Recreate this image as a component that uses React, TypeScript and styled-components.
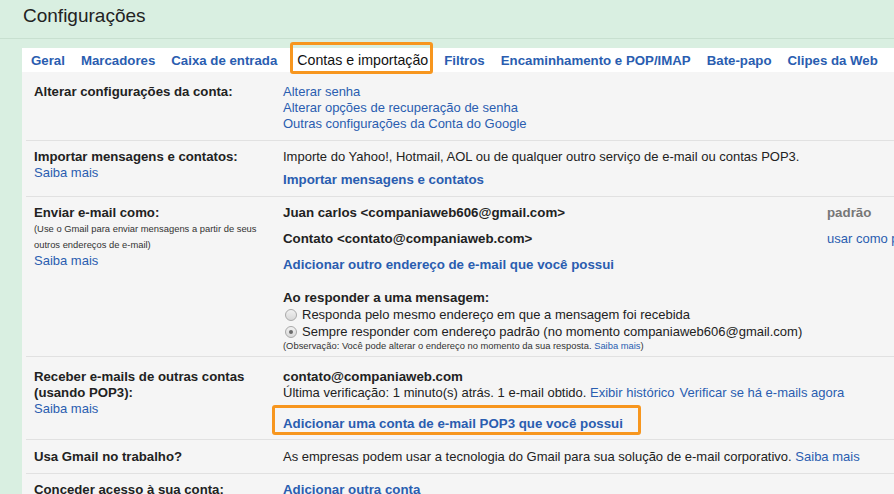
import React from 'react'
import styled, { createGlobalStyle } from 'styled-components'

const GlobalStyle = createGlobalStyle`
  html, body {
    margin: 0;
    padding: 0;
    overflow: hidden;
    background: #d9efe1;
  }
  body {
    font-family: "Liberation Sans", Arial, sans-serif;
    color: #222;
  }
`

const Page = styled.div`
  width: 894px;
  height: 494px;
  overflow: hidden;
`

const Header = styled.div`
  height: 33px;
  padding: 5px 0 0 23px;
  border-bottom: 1px solid #c8e0d0;
  font-size: 19px;
  line-height: 22px;
  color: #222;
`

const Panel = styled.div`
  margin: 9px 0 0 22px;
  background: #f5f5f5;
  padding-bottom: 40px;
`

const TabBar = styled.div`
  display: flex;
  height: 24px;
  padding-left: 1px;
  background: #fff;
`

const Tab = styled.div<{ $active?: boolean }>`
  position: relative;
  height: 24px;
  padding: 0 8px;
  font-size: ${(p) => (p.$active ? '14.2px' : '13.25px')};
  font-weight: ${(p) => (p.$active ? 'normal' : 'bold')};
  line-height: 25px;
  color: ${(p) => (p.$active ? '#111' : '#2a5db0')};
  white-space: nowrap;

  ${(p) =>
    p.$active &&
    `
    margin: 0 0 0 4px;
    &::after {
      content: '';
      position: absolute;
      left: 1px;
      right: 3px;
      top: -6px;
      bottom: -2px;
      border: 3px solid #f7961e;
      border-radius: 3px;
    }
  `}
`

const Body = styled.div`
  padding-top: 4px;
`

const Row = styled.div<{ $top?: number; $bottom?: number }>`
  display: grid;
  grid-template-columns: 249px 544px 140px;
  margin-left: 4px;
  padding: ${(p) => p.$top ?? 8}px 0 ${(p) => p.$bottom ?? 8}px 8px;
  border-bottom: 1px solid #e1e1e1;
  font-size: 13px;
  line-height: 16px;
`

const Label = styled.div`
  font-size: 13.2px;
  font-weight: bold;
  color: #222;
`

const LabelCell = styled.div`
  display: flex;
  flex-direction: column;
`

const Cell = styled.div`
  display: flex;
  flex-direction: column;
  align-items: flex-start;
  white-space: nowrap;
`

const Link = styled.span`
  color: #2a5db0;
  cursor: pointer;
`

const Gap = styled.span`
  display: inline-block;
  width: 5px;
`

const BoldLink = styled.div<{ $mt?: number }>`
  margin-top: ${(p) => p.$mt ?? 0}px;
  font-size: 13.3px;
  font-weight: bold;
  color: #2a5db0;
`

const Strong = styled.div<{ $mt?: number }>`
  margin-top: ${(p) => p.$mt ?? 0}px;
  font-size: 13.3px;
  font-weight: bold;
  color: #222;
`

const Small = styled.div<{ $mt?: number }>`
  margin-top: ${(p) => p.$mt ?? 0}px;
  font-size: 9.4px;
  line-height: 16px;
  color: #333;
`

const SmallNote = styled(Small)`
  line-height: 12px;
`

const Muted = styled.div`
  font-size: 13.3px;
  font-weight: bold;
  color: #777;
`

const Action = styled.div`
  display: flex;
  flex-direction: column;
  white-space: nowrap;
`

const ActionLink = styled(Link)`
  margin-top: 10px;
`

const ReplyBlock = styled.div`
  margin-top: 16px;
  line-height: 17px;
`

const RadioLine = styled.div`
  display: flex;
  align-items: center;
  padding-left: 2px;
`

const Radio = styled.span<{ $checked?: boolean }>`
  position: relative;
  width: 10px;
  height: 10px;
  margin-right: 5px;
  border: 1px solid #a9a9a9;
  border-radius: 50%;
  background: linear-gradient(#f1f1f1, #d8d8d8);

  ${(p) =>
    p.$checked &&
    `
    &::after {
      content: '';
      position: absolute;
      left: 3px;
      top: 3px;
      width: 4px;
      height: 4px;
      border-radius: 50%;
      background: #6a6a6a;
    }
  `}
`

const Highlight = styled.div`
  box-sizing: border-box;
  width: 369px;
  margin: 4px 0 0 -11px;
  padding: 8px 0 0 8px;
  border: 3px solid #f7961e;
  border-radius: 3px;
  font-size: 13.3px;
  font-weight: bold;
  color: #2a5db0;
`

const tabs = [
  'Geral',
  'Marcadores',
  'Caixa de entrada',
  'Contas e importação',
  'Filtros',
  'Encaminhamento e POP/IMAP',
  'Bate-papo',
  'Clipes da Web',
]

const App = () => {
  return (
    <Page>
      <GlobalStyle />
      <Header>Configurações</Header>
      <Panel>
        <TabBar>
          {tabs.map((t) => (
            <Tab key={t} $active={t === 'Contas e importação'}>
              {t}
            </Tab>
          ))}
        </TabBar>
        <Body>
          <Row>
            <LabelCell>
              <Label>Alterar configurações da conta:</Label>
            </LabelCell>
            <Cell>
              <Link>Alterar senha</Link>
              <Link>Alterar opções de recuperação de senha</Link>
              <Link>Outras configurações da Conta do Google</Link>
            </Cell>
          </Row>

          <Row>
            <LabelCell>
              <Label>Importar mensagens e contatos:</Label>
              <Link>Saiba mais</Link>
            </LabelCell>
            <Cell>
              <div>Importe do Yahoo!, Hotmail, AOL ou de qualquer outro serviço de e-mail ou contas POP3.</div>
              <BoldLink $mt={7}>Importar mensagens e contatos</BoldLink>
            </Cell>
          </Row>

          <Row $bottom={4}>
            <LabelCell>
              <Label>Enviar e-mail como:</Label>
              <Small>(Use o Gmail para enviar mensagens a partir de seus</Small>
              <Small>outros endereços de e-mail)</Small>
              <Link>Saiba mais</Link>
            </LabelCell>
            <Cell>
              <Strong>Juan carlos &lt;companiaweb606@gmail.com&gt;</Strong>
              <Strong $mt={10}>Contato &lt;contato@companiaweb.com&gt;</Strong>
              <BoldLink $mt={10}>Adicionar outro endereço de e-mail que você possui</BoldLink>
              <ReplyBlock>
                <Strong>Ao responder a uma mensagem:</Strong>
                <RadioLine>
                  <Radio />
                  Responda pelo mesmo endereço em que a mensagem foi recebida
                </RadioLine>
                <RadioLine>
                  <Radio $checked />
                  Sempre responder com endereço padrão (no momento companiaweb606@gmail.com)
                </RadioLine>
                <SmallNote>
                  (Observação: Você pode alterar o endereço no momento da sua resposta. <Link>Saiba mais</Link>)
                </SmallNote>
              </ReplyBlock>
            </Cell>
            <Action>
              <Muted>padrão</Muted>
              <ActionLink>usar como padrão</ActionLink>
            </Action>
          </Row>

          <Row $top={12} $bottom={4}>
            <LabelCell>
              <Label>Receber e-mails de outras contas</Label>
              <Label>(usando POP3):</Label>
              <Link>Saiba mais</Link>
            </LabelCell>
            <Cell>
              <Strong>contato@companiaweb.com</Strong>
              <div>
                Última verificação: 1 minuto(s) atrás. 1 e-mail obtido. <Link>Exibir histórico</Link>
                <Gap />
                <Link>Verificar se há e-mails agora</Link>
              </div>
              <Highlight>Adicionar uma conta de e-mail POP3 que você possui</Highlight>
            </Cell>
          </Row>

          <Row $top={9}>
            <LabelCell>
              <Label>Usa Gmail no trabalho?</Label>
            </LabelCell>
            <Cell>
              <div>
                As empresas podem usar a tecnologia do Gmail para sua solução de e-mail corporativo.{' '}
                <Link>Saiba mais</Link>
              </div>
            </Cell>
          </Row>

          <Row>
            <LabelCell>
              <Label>Conceder acesso à sua conta:</Label>
            </LabelCell>
            <Cell>
              <BoldLink>Adicionar outra conta</BoldLink>
            </Cell>
          </Row>
        </Body>
      </Panel>
    </Page>
  )
}

export default App
